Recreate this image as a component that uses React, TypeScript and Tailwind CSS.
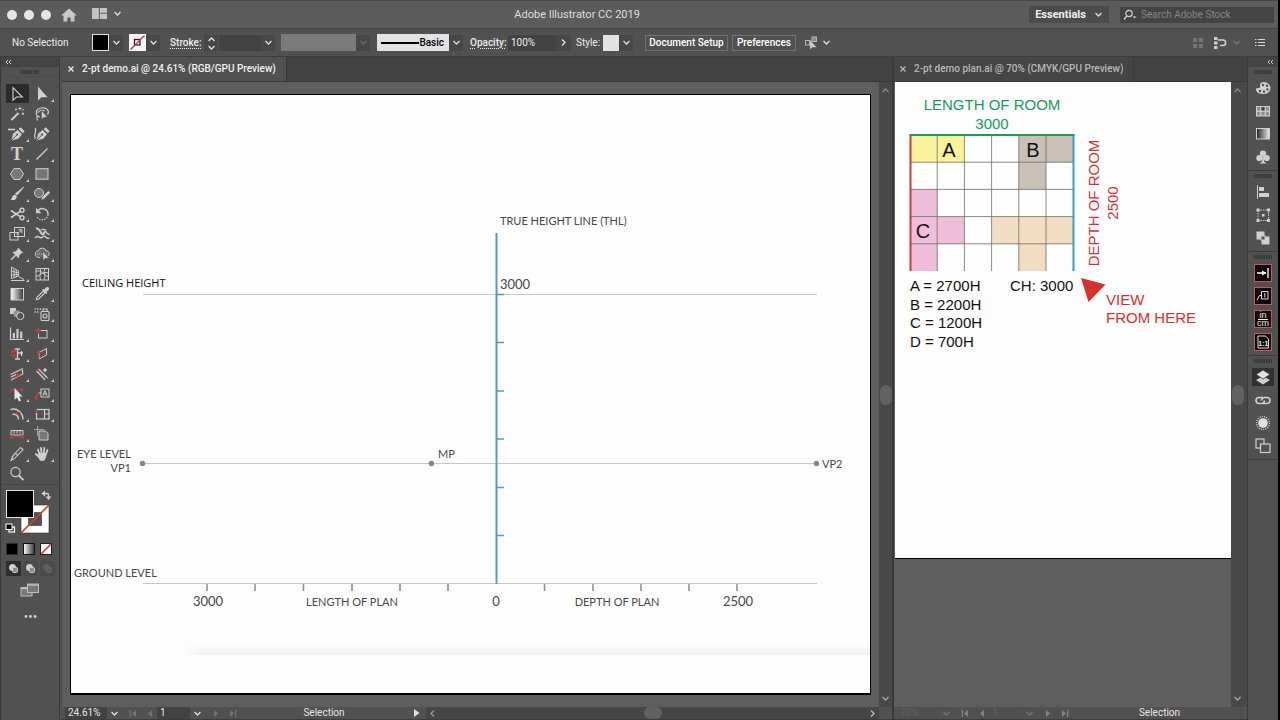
import type { ReactNode } from "react";

const INK = "#cfcfcf";
const RED = "#c2403c";

/* ---------- small shared pieces ---------- */

function Chevron({ dir = "down", color = "#e0e0e0" }: { dir?: "down" | "up" | "left" | "right"; color?: string }) {
  const d = {
    down: "M1.5 3L4.5 6L7.5 3",
    up: "M1.5 6L4.5 3L7.5 6",
    left: "M6 1.5L3 4.5L6 7.5",
    right: "M3 1.5L6 4.5L3 7.5",
  }[dir];
  return (
    <svg viewBox="0 0 9 9" className="size-[9px] shrink-0" fill="none" stroke={color} strokeWidth="1.3">
      <path d={d} />
    </svg>
  );
}

function DropButton({ label, dim }: { label: string; dim?: boolean }) {
  return (
    <button aria-label={label} className="flex h-4 w-[14px] items-center justify-center bg-[#474747]">
      <Chevron color={dim ? "#6c6c6c" : "#e0e0e0"} />
    </button>
  );
}

function Grip() {
  return (
    <div className="flex h-[9px] items-center justify-center">
      <svg viewBox="0 0 18 4" className="h-1 w-[18px]" stroke="#343434">
        <path d="M0 2H18" strokeWidth="4" strokeDasharray="1.4 1" />
      </svg>
    </div>
  );
}

/* ---------- tool icons, drawn on an 18 x 18 grid ---------- */

const arrow = (x: number, y: number) => (
  <path d={`M${x} ${y}v9l2.3-2.2H${x + 6}z`} fill={INK} stroke="#505050" strokeWidth=".5" />
);
const nib = (
  <>
    <path d="M3.5 15.5L5 8.8L9.5 5L14 9.3L10.3 13.7Z" fill={INK} />
    <path d="M10.6 4L12.6 2.2L16.6 6.2L14.9 8.2Z" fill={INK} />
    <path d="M3.8 15.2L8.8 10" stroke="#505050" strokeWidth=".9" />
    <circle cx="9.2" cy="9.6" r="1" fill="#505050" />
  </>
);

const tools: { name: string; flag?: boolean; icon: ReactNode }[] = [
  { name: "Selection", icon: <path d="M5 2.5V15.3L8.4 12H14.3Z" fill="none" stroke={INK} strokeWidth="1.1" /> },
  { name: "Direct Selection", flag: true, icon: <path d="M5 1.5V15.5L8.5 12.2H14.5Z" fill={INK} /> },
  {
    name: "Magic Wand",
    icon: (
      <g stroke={INK} fill="none">
        <path d="M3.5 15L10.5 8" strokeWidth="1.9" />
        <path d="M12 2V5M10.5 3.5H13.5M15 7.5V10M13.8 8.7H16.2M8 3.5V5.5M7 4.5H9M14 5.8L15.8 4" strokeWidth="1" />
      </g>
    ),
  },
  {
    name: "Lasso",
    icon: (
      <>
        <path d="M7 12C2 12 1.5 4 8 3C14 2 17 6 14.5 9.5M4.5 10.5C3 12 5 13.5 4 15.5M5 8C5 5.5 9 4.5 12 6" fill="none" stroke={INK} strokeWidth="1.2" />
        {arrow(8.5, 5.5)}
      </>
    ),
  },
  { name: "Pen", flag: true, icon: <>{nib}<path d="M0 4.5H7" stroke={INK} strokeWidth="1.6" /></> },
  { name: "Curvature", icon: <>{nib}<path d="M2 3C4.5 6 0 9 2.2 14" stroke={INK} strokeWidth="1.2" fill="none" /></> },
  {
    name: "Type",
    flag: true,
    icon: (
      <text x="9" y="14.5" textAnchor="middle" fontFamily="Liberation Serif, serif" fontWeight="700" fontSize="18" fill={INK}>
        T
      </text>
    ),
  },
  { name: "Line Segment", flag: true, icon: <path d="M3.5 14.5L14.5 3.5" stroke={INK} strokeWidth="1.3" /> },
  { name: "Polygon", flag: true, icon: <path d="M6 3.5H12L15.5 9L12 14.5H6L2.5 9Z" fill="#777" stroke={INK} /> },
  { name: "Rectangle", icon: <rect x="3" y="3.7" width="12" height="10.5" fill="#777" stroke={INK} /> },
  {
    name: "Paintbrush",
    flag: true,
    icon: (
      <>
        <path d="M15.8 2L9 10.2L7.4 8.8Z" fill={INK} stroke={INK} strokeWidth=".9" />
        <path d="M6.8 9.5L8.8 11.4C8.8 14.5 6 15.6 2.5 14.8C4.4 14 3.8 10.2 6.8 9.5Z" fill={INK} />
      </>
    ),
  },
  {
    name: "Shaper",
    flag: true,
    icon: (
      <>
        <circle cx="6" cy="8" r="4.5" fill="#777" stroke={INK} />
        <path d="M8 15L9 12L15.3 5.8L17.2 7.7L11 14Z" fill={INK} stroke="#505050" strokeWidth=".5" />
      </>
    ),
  },
  {
    name: "Scissors",
    flag: true,
    icon: (
      <g fill="none" stroke={INK} strokeWidth="1.4">
        <circle cx="14" cy="5.3" r="2" />
        <circle cx="14" cy="12.7" r="2" />
        <path d="M12.2 6.4L3 12.5M12.2 11.6L3 5.5" strokeWidth="1.7" />
      </g>
    ),
  },
  {
    name: "Rotate",
    flag: true,
    icon: (
      <>
        <path d="M5 5.5C9 1.5 15.3 4.5 15 9.5" fill="none" stroke={INK} strokeWidth="1.5" />
        <path d="M15 9.5C14.5 15.5 7 16.5 4 12" fill="none" stroke={INK} strokeWidth="1.4" strokeDasharray="1.3 1.3" />
        <path d="M3 2.8V8.2H8.4Z" fill={INK} />
      </>
    ),
  },
  {
    name: "Scale",
    flag: true,
    icon: (
      <g fill="none" stroke={INK}>
        <rect x="6.5" y="2.5" width="10" height="9" />
        <rect x="2" y="7.5" width="8" height="7.5" />
        <path d="M8.5 9.5L13.5 5M10.5 4.7H13.8V8" />
      </g>
    ),
  },
  {
    name: "Warp",
    flag: true,
    icon: (
      <g fill="none" stroke={INK} strokeWidth="1.4">
        <path d="M3 3.5C6.5 2.500 6.500 6.500 8.500 8.500C10.500 10.500 12 8 11 6.500" strokeWidth="2" />
        <path d="M8 5C10.500 3 11.500 6 13 4.500M12 6.500C14 6 13 9.500 16.500 9.500" />
        <path d="M2 13C5 8.500 7 15 9.500 12C12 9 13 15 16.500 13" />
      </g>
    ),
  },
  {
    name: "Puppet Warp",
    flag: true,
    icon: (
      <>
        <path d="M10 2.5L15.2 7.7L13.4 8.2L11.2 10.4L10.7 13.4L4.3 7L7.4 6.6L9.5 4.4Z" fill={INK} />
        <path d="M7.5 10.2L3 14.7" stroke={INK} strokeWidth="1.5" />
      </>
    ),
  },
  {
    name: "Shape Builder",
    flag: true,
    icon: (
      <>
        <path d="M7 12.5C1 13 1 6.5 5 6C6.5 2 13 2.5 13 6C17 6 17 10 15 11" fill="#6a6a6a" stroke={INK} />
        <path d="M4 9H11" stroke={INK} strokeDasharray="1 1" />
        {arrow(10, 6.5)}
      </>
    ),
  },
  {
    name: "Perspective Grid",
    flag: true,
    icon: (
      <g fill="none" stroke={INK}>
        <path d="M3.5 2V13.5L10.5 11V6ZM6 3.5V12.5M8.3 5V11.8M3.5 6L10.5 8M3.5 10L10.5 9.5" />
        <path d="M3 15.5H16.5M10.5 11.5L16 14.5" />
      </g>
    ),
  },
  {
    name: "Mesh",
    icon: (
      <g fill="none" stroke={INK}>
        <rect x="3" y="3.5" width="12.5" height="11.5" />
        <path d="M3 11C7 12 8 6 15.5 8M7 3.5C9 8 5 10 8 15M12 3.5C9.5 8 13.5 11 11 15M3 6.5C8 4 11 10 15.5 12" />
      </g>
    ),
  },
  { name: "Gradient", icon: <rect x="3" y="3.5" width="12.5" height="11.5" fill="url(#fade)" stroke={INK} /> },
  {
    name: "Eyedropper",
    flag: true,
    icon: (
      <>
        <path d="M3.3 14.7L4 12.3L10.3 6L12 7.7L5.7 14Z" fill="none" stroke={INK} strokeWidth="1.1" />
        <path d="M9 4.8L10.3 3.8L11.4 4.8C12.5 2.2 14.2 1.2 15.6 2.4C16.9 3.7 15.8 5.5 13.3 6.6L14.3 7.8L13.2 9Z" fill={INK} />
      </>
    ),
  },
  {
    name: "Blend",
    icon: (
      <>
        <rect x="2" y="3" width="6" height="6" fill={INK} />
        <rect x="5.5" y="5.5" width="6.5" height="6.5" rx="2" fill="#999" />
        <circle cx="12.3" cy="11" r="3.6" fill="#515151" stroke={INK} />
      </>
    ),
  },
  {
    name: "Symbol Sprayer",
    flag: true,
    icon: (
      <g fill="none" stroke={INK} strokeWidth="1.1">
        <rect x="8" y="6.5" width="8" height="9" rx="1" />
        <path d="M10 6V4H14V6" />
        <circle cx="12" cy="11" r="2" />
        <path d="M1.5 4H8M1.5 7H6" strokeDasharray="1.3 1.3" strokeWidth="1.4" />
      </g>
    ),
  },
  { name: "Column Graph", flag: true, icon: <><path d="M2.500 2.500V14.500H16" fill="none" stroke={INK} strokeWidth="1.200" /><path d="M5.800 13.500V8M9.500 13.500V4M13.200 13.500V6.500" stroke={INK} strokeWidth="2.200" /></> },
  {
    name: "Dynamic Rectangle",
    flag: true,
    icon: (
      <g fill="none">
        <rect x="5.5" y="5.5" width="8.5" height="7.5" stroke={INK} />
        <path d="M2.5 5.5H8M5.5 3V9" stroke={RED} strokeWidth="1.3" />
      </g>
    ),
  },
  {
    name: "Trim",
    flag: true,
    icon: (
      <g fill="none" strokeWidth="1.3">
        <path d="M9.500 3.500V14.500M7 4H12M7 14H12M9.500 8H15M13.500 6V11" stroke={INK} />
        <path d="M3 6H8M3 10.500H8M6 4V13M3 8.200H5" stroke={RED} />
      </g>
    ),
  },
  {
    name: "Shear Box",
    flag: true,
    icon: (
      <g fill="none">
        <path d="M6 7.5L13.5 3.5V10L6 14Z" stroke={INK} />
        <path d="M3.500 7.500H8.500M5.500 5V14" stroke={RED} strokeWidth="1.3" />
      </g>
    ),
  },
  {
    name: "Hatch",
    flag: true,
    icon: (
      <g fill="none" strokeWidth="1.2">
        <path d="M2.5 9.500L15 3.5M3 15L15.5 8.5M3 12L8 9.500M14.500 5V8" stroke={INK} />
        <path d="M5.500 13L13 9M9.500 12V7.500M7.500 8.500L12 11" stroke={RED} />
      </g>
    ),
  },
  {
    name: "Add Edge",
    flag: true,
    icon: (
      <g fill="none" strokeWidth="1.3">
        <path d="M5.5 4L14.5 13M3.5 6L12 14.8M12 3V7M10 5H14" stroke={INK} />
        <path d="M4 4L9 9.5" stroke={RED} strokeWidth="1.5" />
      </g>
    ),
  },
  {
    name: "Live Snap",
    flag: true,
    icon: (
      <>
        <path d="M2.5 5H15M3.5 3V7M14 3V7" stroke={RED} strokeWidth="1.2" />
        <path d="M6.5 3V14.8L9 12.5L11 16.5L13 15.5L11.2 11.5H14.5Z" fill="#e8e8e8" />
      </>
    ),
  },
  {
    name: "Label",
    flag: true,
    icon: (
      <>
        <rect x="8" y="4" width="8" height="8" fill="none" stroke={INK} />
        <path d="M10 10.5L12 5.5L14 10.5M10.8 9H13.2M8 8H5.5" fill="none" stroke={INK} />
        <path d="M2.5 13.5L6 8.5M2.5 10.5V13.8H5.5" fill="none" stroke={RED} strokeWidth="1.3" />
      </>
    ),
  },
  {
    name: "Offset",
    flag: true,
    icon: (
      <g fill="none" strokeWidth="1.4">
        <path d="M2.5 4.5C9 2.5 15 8 15 14.5M4.5 9.5C8 8.5 10.5 11 10.5 14.5" stroke={INK} />
        <path d="M8 5.500L12 12M7.500 9L12.500 7.500" stroke={RED} strokeWidth="1.100" />
      </g>
    ),
  },
  {
    name: "Panel Scale",
    flag: true,
    icon: (
      <g fill="none" strokeWidth="1.2">
        <rect x="3.5" y="4.5" width="12.5" height="9.5" stroke={INK} />
        <path d="M11.5 4.5V14M11.5 9H16" stroke={INK} />
        <path d="M2 5.5H6.5M3.5 3V8" stroke={RED} />
      </g>
    ),
  },
  {
    name: "Measure",
    flag: true,
    icon: (
      <g fill="none" strokeWidth="1.2">
        <path d="M3 10V5.5H15V10M6 5.5V8.5M9 5.5V8.5M12 5.5V8.5M3 10H15" stroke={INK} strokeWidth="1" />
        <path d="M2.5 12H15.5M4.5 10L2.5 12L4.5 14M13.5 10L15.5 12L13.5 14" stroke={RED} />
      </g>
    ),
  },
  {
    name: "Artboard",
    icon: (
      <>
        <path d="M6 6H12.5L15 8.5V15H6Z" fill="#777" stroke={INK} />
        <path d="M1 4.5H11M4.5 1V11" stroke="#aaa" strokeWidth=".9" />
      </>
    ),
  },
  { name: "Slice", flag: true, icon: <path d="M3 15.5C4 12 5 10 7.5 8L9.5 10.5C7.5 13 6 14.5 3 15.5ZM7.5 8L12.5 2.5L15 4.5L9.5 10.5" fill="none" stroke={INK} strokeWidth="1.1" /> },
  {
    name: "Hand",
    flag: true,
    icon: (
      <g stroke={INK} strokeLinecap="round" fill={INK}>
        <path d="M6.5 9L5 4.5M8.5 8.5L8 2.8M10.8 8.5L11.3 3M12.8 9.5L14.5 5M6.2 12L2.8 9" strokeWidth="1.8" />
        <path d="M6 8.5H13L12.5 12.5L11 15.3H7.3L5.2 11.5Z" strokeWidth="1" />
      </g>
    ),
  },
  {
    name: "Zoom",
    icon: (
      <g fill="none" stroke={INK}>
        <circle cx="7.5" cy="7" r="4.6" strokeWidth="1.2" />
        <path d="M10.8 10.5L15.5 15.2" strokeWidth="1.8" />
      </g>
    ),
  },
];

function Toolbar() {
  return (
    <aside aria-label="Tools" className="flex w-[60px] shrink-0 flex-col border-x border-[#3b3b3b] bg-[#515151]">
      <button aria-label="Collapse tools" className="flex h-[10px] items-center bg-[#444444] pl-1">
        <svg viewBox="0 0 7 6" className="h-[6px] w-[7px]" fill="none" stroke="#c8c8c8">
          <path d="M3 1L1 3L3 5M6 1L4 3L6 5" />
        </svg>
      </button>
      <div className="border-b border-[#4c4c4c]">
        <Grip />
      </div>
      <div className="mt-[7px] grid grid-cols-[25px_25px] pl-[5px]">
        {tools.map((t, i) => (
          <button key={t.name} aria-label={t.name} title={t.name} className="h-5 w-[25px]">
            <svg viewBox="0 0 25 20" className="h-5 w-[25px]">
              {i === 0 && <rect x="0" y="0" width="23" height="19" rx="1" fill="#2b2b2b" />}
              <g transform="translate(2 1)">{t.icon}</g>
              {t.flag && <path d="M20 18H23V15Z" fill={INK} />}
            </svg>
          </button>
        ))}
      </div>
      <div className="flex justify-center border-t border-[#484848] pt-[2px]">
        <svg viewBox="5 488 50 48" className="h-12 w-[50px]">
          <path d="M21 506H49V534H21ZM28.500 513.500V526.500H41.500V513.500Z" fill="#fdfdfd" fillRule="evenodd" stroke="#333" strokeWidth=".6" />
          <path d="M21 534L49 506" stroke="#d43b37" strokeWidth="1.7" />
          <rect x="6.500" y="491.500" width="27" height="27" fill="#000" stroke="#e9e9e9" />
          <path d="M43.500 494.500H47.500C48.500 494.500 48.500 495 48.500 499" fill="none" stroke={INK} strokeWidth="1.3" />
          <path d="M45 491.500V497.500L41.500 494.500ZM45.500 497.500H51.500L48.500 501Z" fill={INK} />
          <rect x="9" y="528" width="5.500" height="5" fill="#505050" stroke="#fff" strokeWidth="1.2" />
          <rect x="6" y="525" width="6" height="5.500" fill="#000" stroke="#fff" />
        </svg>
      </div>
      <div className="mt-[6px] flex gap-[5px] pl-[5px]">
        <button aria-label="Color" className="flex h-4 w-3 items-center justify-center">
          <svg viewBox="0 0 12 12" className="size-3"><rect x=".5" y=".5" width="11" height="11" fill="#000" stroke="#2c2c2c" /></svg>
        </button>
        <button aria-label="Gradient fill" className="flex h-4 w-3 items-center justify-center">
          <svg viewBox="0 0 12 12" className="size-3"><rect x=".5" y=".5" width="11" height="11" fill="url(#fade)" stroke="#111" /></svg>
        </button>
        <button aria-label="None" className="flex h-4 w-3 items-center justify-center">
          <svg viewBox="0 0 12 12" className="size-3">
            <rect x=".5" y=".5" width="11" height="11" fill="#fff" stroke="#222" />
            <path d="M1 11L11 1" stroke="#d43b37" strokeWidth="1.7" />
          </svg>
        </button>
      </div>
      <div className="mt-1 flex gap-[2px] pl-[5px]">
        {["Draw Normal", "Draw Behind", "Draw Inside"].map((name, i) => (
          <button key={name} aria-label={name} className={i === 0 ? "size-[15px] bg-[#2e2e2e]" : "size-[15px] bg-[#4b4b4b]"}>
            <svg viewBox="0 0 15 15" className="size-[15px]">
              <circle cx="6.500" cy="6.500" r="3.500" fill={i === 2 ? "#5e5e5e" : INK} />
              <rect x="6.500" y="6.500" width="5" height="5" rx="1" fill={i === 2 ? "#5a5a5a" : "#8d8d8d"} stroke={i === 2 ? "#666" : INK} />
            </svg>
          </button>
        ))}
      </div>
      <button aria-label="Change Screen Mode" className="mt-[7px] flex justify-center">
        <svg viewBox="0 0 20 15" className="h-[15px] w-5" fill="#777" stroke="#bdbdbd">
          <rect x="1" y="4.500" width="11" height="8.500" />
          <rect x="7.500" y="1" width="11" height="8.500" />
          <path d="M1 5.500H7M7.500 2H18.500" strokeWidth="1.5" />
        </svg>
      </button>
      <button aria-label="Edit Toolbar" className="mt-[14px] flex justify-center">
        <svg viewBox="0 0 13 9" className="h-[9px] w-[13px]" fill={INK}>
          <circle cx="2" cy="4.500" r="1.400" />
          <circle cx="6.500" cy="4.500" r="1.400" />
          <circle cx="11" cy="4.500" r="1.400" />
        </svg>
      </button>
    </aside>
  );
}

/* ---------- title bar and control bar ---------- */

function TitleBar() {
  return (
    <header className="flex h-[29px] shrink-0 items-center border-y border-t-[#474747] border-b-[#464646] bg-[#5c5c5c] pl-[7px] pr-1">
      <div className="flex flex-[4] items-center">
        <div className="flex gap-[7px]">
          {["Close", "Minimize", "Full screen"].map((n) => (
            <button key={n} aria-label={n} className="size-[10px] rounded-full bg-[#e4e4e4]" />
          ))}
        </div>
        <button aria-label="Home" className="ml-[10px]">
          <svg viewBox="0 0 16 14" className="h-[14px] w-4" fill="#c9c9c9">
            <path d="M8 .5L15.800 7.500H13.500V13.500H9.600V9.500H6.400V13.500H2.500V7.500H.2Z" />
          </svg>
        </button>
        <button aria-label="Arrange Documents" className="ml-[15px] flex items-center gap-[6px] pb-[2px]">
          <svg viewBox="0 0 15 11" className="h-[11px] w-[15px]" fill="#c4c4c4">
            <path d="M0 0H6.800V11H0ZM7.800 0H15V4.800H7.800ZM7.800 5.800H15V11H7.800Z" />
          </svg>
          <Chevron />
        </button>
      </div>
      <h1 className="text-[11px] leading-4 text-[#dedede]">Adobe Illustrator CC 2019</h1>
      <div className="flex flex-[5] items-center justify-end gap-[11px]">
        <button className="flex h-[17px] w-20 items-center justify-center gap-2 bg-[#4c4c4c] text-[11px] font-bold leading-4 text-[#f2f2f2]">
          Essentials
          <Chevron />
        </button>
        <label className="flex h-4 w-[154px] items-center gap-1 bg-[#444444] pl-[3px]">
          <svg viewBox="0 0 14 12" className="h-3 w-[14px] shrink-0" fill="none" stroke="#d0d0d0">
            <circle cx="6" cy="4.500" r="3.200" strokeWidth="1.200" />
            <path d="M3.800 7L1 10.500" strokeWidth="1.400" />
            <path d="M9.500 7.500H13.500L11.500 9.500Z" fill="#d0d0d0" stroke="none" />
          </svg>
          <input
            type="search"
            aria-label="Search Adobe Stock"
            placeholder="Search Adobe Stock"
            className="w-full min-w-0 bg-transparent text-[10px] leading-4 outline-none placeholder:text-[#858585]"
          />
        </label>
      </div>
    </header>
  );
}

function ControlBar() {
  return (
    <div className="flex h-7 shrink-0 items-center border-b border-[#3d3d3d] bg-[#515151] pl-3 pr-[13px] text-[10px] leading-4 text-[#ececec]">
      <span className="w-20">No Selection</span>
      <button aria-label="Fill" className="size-[17px] border border-[#e0e0e0] bg-black" />
      <DropButton label="Fill options" />
      <button aria-label="Stroke color" className="ml-[6px]">
        <svg viewBox="0 0 17 17" className="size-[17px]">
          <rect width="17" height="17" fill="#f6f6f6" />
          <rect x="5.500" y="5.500" width="5.500" height="5.500" fill="none" stroke="#222" strokeWidth="1.300" />
          <path d="M1.500 15.500L15.500 1.500" stroke="#c8403c" strokeWidth="1.500" />
        </svg>
      </button>
      <DropButton label="Stroke color options" />
      <label htmlFor="weight" className="ml-[10px] w-[34px] font-medium underline decoration-dotted underline-offset-2">
        Stroke:
      </label>
      <div className="flex w-[14px] flex-col items-center bg-[#474747]">
        <button aria-label="Increase stroke" className="h-2"><Chevron dir="up" /></button>
        <button aria-label="Decrease stroke" className="h-2"><Chevron /></button>
      </div>
      <input id="weight" className="ml-px h-4 w-[42px] bg-[#424242] px-1 outline-none" />
      <DropButton label="Stroke weights" />
      <div className="ml-[6px] h-[17px] w-[75px] bg-[#7b7b7b]" />
      <DropButton label="Variable width profile" dim />
      <button className="ml-[7px] flex h-[17px] w-[72px] items-center justify-between bg-[#e2e2e2] pl-1 pr-[5px] font-medium text-black">
        <span className="h-[2px] w-[38px] bg-black" />
        Basic
      </button>
      <DropButton label="Brush definitions" />
      <label htmlFor="opacity" className="ml-[7px] w-[38px] font-medium underline decoration-dotted underline-offset-2">
        Opacity:
      </label>
      <input id="opacity" defaultValue="100%" className="h-4 w-12 bg-[#424242] px-[3px] outline-none" />
      <button aria-label="Opacity slider" className="flex h-4 w-[15px] items-center justify-center bg-[#474747]">
        <Chevron dir="right" />
      </button>
      <span className="ml-[5px] w-[27px]">Style:</span>
      <button aria-label="Graphic style" className="size-4 bg-[#e2e2e2]" />
      <DropButton label="Graphic styles" />
      <button className="ml-3 h-4 w-[83px] whitespace-nowrap border border-[#727272] font-medium leading-[14px] text-white">Document Setup</button>
      <button className="ml-1 h-4 w-16 border border-[#727272] font-medium leading-[14px] text-white">Preferences</button>
      <button aria-label="Select Similar" className="ml-2 flex items-center gap-1">
        <svg viewBox="0 0 14 14" className="size-[14px]" fill="none" stroke="#b5b5b5">
          <rect x="8" y="1" width="4.500" height="4.500" fill="#888" />
          <rect x="1.500" y="4.500" width="4" height="4.500" />
          <path d="M6 4V13.500L8.200 11.200H12.500Z" fill="#c9c9c9" stroke="none" />
        </svg>
        <Chevron />
      </button>
      <div className="ml-auto flex items-center">
        <svg viewBox="0 0 11 11" className="size-[10px]" fill="#757575">
          <path d="M0 0H4.500V4.500H0ZM6.500 0H11V4.500H6.500ZM0 6.500H4.500V11H0ZM6.500 6.500H11V11H6.500Z" />
        </svg>
        <button aria-label="Snap options" className="ml-[10px] flex items-center gap-[5px]">
          <svg viewBox="0 0 14 12" className="h-3 w-[14px]" fill="#cfcfcf">
            <path d="M1 0H4.500V3H1ZM1 4.500H4.500V7.500H1ZM1 9H4.500V12H1Z" />
            <path d="M5 3H10C13.500 3 13.500 8.500 10 8.500H7" fill="none" stroke="#cfcfcf" strokeWidth="1.600" />
          </svg>
          <Chevron color="#777" />
        </button>
        <button aria-label="Panel menu" className="ml-[14px]">
          <svg viewBox="0 0 10 9" className="h-[9px] w-[10px]" stroke="#d6d6d6" strokeWidth="1.200">
            <path d="M0 1.500H1.500M0 4.500H1.500M0 7.500H1.500M3 1.500H10M3 4.500H10M3 7.500H10" />
          </svg>
        </button>
      </div>
    </div>
  );
}

/* ---------- documents ---------- */

function DocTab({ title, active }: { title: string; active?: boolean }) {
  return (
    <div role="tablist" className="flex h-[25px] shrink-0 border-b border-[#3a3a3a] bg-[#424242]">
      <div className={active ? "flex items-center border-r border-[#383838] bg-[#515151] pl-[6px] pr-[10px] text-[#f0f0f0]" : "flex items-center border-r border-[#3b3b3b] bg-[#454545] pl-[6px] pr-[10px] text-[#b8b8b8]"}>
        <button aria-label={`Close ${title}`} className="mr-2">
          <svg viewBox="0 0 6 6" className="size-[6px]" stroke="currentColor" strokeWidth="1.200">
            <path d="M.5 .5L5.500 5.500M5.500 .5L.5 5.500" />
          </svg>
        </button>
        <button role="tab" aria-selected={!!active} className="whitespace-nowrap text-[10px] font-medium leading-4">
          {title}
        </button>
      </div>
    </div>
  );
}

function VScroll() {
  return (
    <div className="flex w-[13px] shrink-0 flex-col items-center justify-between bg-[#484848] py-1">
      <button aria-label="Scroll up"><Chevron dir="up" color="#8c8c8c" /></button>
      <span className="h-5 w-3 rounded-full bg-[#626262]" />
      <button aria-label="Scroll down"><Chevron color="#a8a8a8" /></button>
    </div>
  );
}

function NavArrow({ label, end, flip, dim }: { label: string; end?: boolean; flip?: boolean; dim?: boolean }) {
  return (
    <button aria-label={label} className="flex w-4 justify-center">
      <svg viewBox="0 0 9 7" className={flip ? "h-[7px] w-[9px] rotate-180" : "h-[7px] w-[9px]"} fill={dim ? "#838383" : "#737373"}>
        <path d="M2 0L6 3.500L2 7Z" />
        {end && <path d="M7 0H8.300V7H7Z" />}
      </svg>
    </button>
  );
}

function StatusBar({ id, zoom, page, active }: { id: string; zoom: string; page: string; active?: boolean }) {
  const field = active ? "bg-[#424242] text-[#e6e6e6]" : "bg-[#505050] text-[#606060]";
  return (
    <div className="flex h-[13px] shrink-0 items-center border-b border-[#3c3c3c] bg-[#515151] pl-[3px] text-[10px] leading-3 text-[#e6e6e6]">
      <input aria-label={`${id} zoom level`} defaultValue={zoom} className={`h-3 w-[42px] px-[3px] outline-none ${field}`} />
      <button aria-label={`${id} zoom presets`} className="flex w-[14px] justify-center"><Chevron color={active ? "#e0e0e0" : "#757575"} /></button>
      <div className="ml-1 flex">
        <NavArrow label="First artboard" end flip dim={!active} />
        <NavArrow label="Previous artboard" flip dim={!active} />
      </div>
      <input aria-label={`${id} artboard number`} defaultValue={page} className={`h-3 w-[33px] px-[3px] outline-none ${field}`} />
      <button aria-label={`${id} artboard list`} className="flex w-[14px] justify-center"><Chevron color={active ? "#e0e0e0" : "#757575"} /></button>
      <div className="ml-1 flex">
        <NavArrow label="Next artboard" dim={!active} />
        <NavArrow label="Last artboard" end dim={!active} />
      </div>
      {active ? (
        <>
          <span className="w-[168px] text-center">Selection</span>
          <button aria-label="Status options" className="flex w-[18px] justify-center">
            <svg viewBox="0 0 6 8" className="h-2 w-[6px]" fill="#e0e0e0"><path d="M0 0L5.500 4L0 8Z" /></svg>
          </button>
          <div className="flex h-3 flex-1 items-center justify-between bg-[#464646] px-[2px]">
            <button aria-label="Scroll left"><Chevron dir="left" color="#999" /></button>
            <span className="h-3 w-[18px] rounded-full bg-[#626262]" />
            <button aria-label="Scroll right"><Chevron dir="right" color="#bbb" /></button>
          </div>
          <span className="w-[13px]" />
        </>
      ) : (
        <span className="flex-1 text-center">Selection</span>
      )}
    </div>
  );
}

const leftTicks = [207, 255, 303.5, 352, 400, 448];
const rightTicks = [544.5, 593, 641, 689, 737];
const heightTicks = [294.5, 342.5, 391, 439, 487.5, 535.5];

type Label = [number, number, string, "start" | "middle" | "end"];

const wordLabels: Label[] = [
  [500, 225, "TRUE HEIGHT LINE (THL)", "start"],
  [77, 458, "EYE LEVEL", "start"],
  [131, 472, "VP1", "end"],
  [438, 458, "MP", "start"],
  [822, 468, "VP2", "start"],
  [74, 577, "GROUND LEVEL", "start"],
  [352, 606, "LENGTH OF PLAN", "middle"],
  [617, 606, "DEPTH OF PLAN", "middle"],
];

const numberLabels: Label[] = [
  [500, 289, "3000", "start"],
  [208, 606, "3000", "middle"],
  [496, 606, "0", "middle"],
  [738, 606, "2500", "middle"],
];

function Labels({ items }: { items: Label[] }) {
  return (
    <>
      {items.map(([x, y, t, a]) => (
        <text key={`${t}-${x}`} x={x} y={y} textAnchor={a}>{t}</text>
      ))}
    </>
  );
}

function PerspectiveDrawing() {
  return (
    <svg viewBox="71 95 799 598" className="h-full w-full bg-[#fdfdfd]" fontFamily="Lato, sans-serif">
      <defs>
        <linearGradient id="haze" x1="0" y1="0" x2="0" y2="1">
          <stop offset="0" stopColor="#fdfdfd" />
          <stop offset="1" stopColor="#f1f1f1" />
        </linearGradient>
        <linearGradient id="hazeEdge" x1="0" y1="0" x2="1" y2="0">
          <stop offset="0" stopColor="#fdfdfd" />
          <stop offset="1" stopColor="#fdfdfd" stopOpacity="0" />
        </linearGradient>
      </defs>
      <rect x="181" y="643" width="690" height="12" fill="url(#haze)" />
      <rect x="180" y="642" width="24" height="14" fill="url(#hazeEdge)" />
      <g stroke="#c6c6c6">
        <path d="M143 294.500H817M143 463.500H817M143 583.500H817" />
      </g>
      <g stroke="#8a8a8a" strokeWidth="1.500">
        {[...leftTicks, ...rightTicks].map((x) => (
          <path key={x} d={`M${x} 584V591`} />
        ))}
      </g>
      <g stroke="#5e97bd" strokeWidth="2">
        <path d="M496.500 233V584" />
        {heightTicks.map((y) => (
          <path key={y} d={`M497 ${y}H504`} strokeWidth="1.500" />
        ))}
      </g>
      <g fill="#858585">
        <circle cx="142.500" cy="463.500" r="2.700" />
        <circle cx="431.500" cy="463.500" r="2.700" />
        <circle cx="816.500" cy="463.500" r="2.700" />
      </g>
      <g fill="#484848" fontSize="11"><Labels items={wordLabels} /></g>
      <g fill="#484848" fontSize="13"><Labels items={numberLabels} /></g>
      <text x="82" y="287" fill="#111111" fontFamily="Open Sans, sans-serif" fontSize="11">CEILING HEIGHT</text>
    </svg>
  );
}

const cell = 27.2;
const shaded: [number, number, string][] = [
  [0, 0, "#faf39c"], [1, 0, "#faf39c"],
  [4, 0, "#cbc0b6"], [5, 0, "#cbc0b6"], [4, 1, "#cbc0b6"],
  [0, 2, "#eebdda"], [0, 3, "#eebdda"], [1, 3, "#eebdda"], [0, 4, "#eebdda"],
  [3, 3, "#f2dcc2"], [4, 3, "#f2dcc2"], [5, 3, "#f2dcc2"], [4, 4, "#f2dcc2"],
];

function PlanDrawing() {
  return (
    <svg viewBox="895 82 336 476" className="h-[476px] w-full bg-[#fdfdfd]" fontFamily="Liberation Sans, Arial, sans-serif" fontSize="15">
      {shaded.map(([c, r, f]) => (
        <rect key={`${c}-${r}`} x={910 + c * cell} y={135 + r * cell} width={cell} height={cell} fill={f} />
      ))}
      <g stroke="#6b6b6b" strokeWidth=".8">
        {[1, 2, 3, 4, 5].map((n) => (
          <path key={n} d={`M${910 + n * cell} 135V271`} />
        ))}
        {[1, 2, 3, 4].map((n) => (
          <path key={n} d={`M910 ${135 + n * cell}H1074`} />
        ))}
      </g>
      <path d="M910.500 135V271" stroke="#c93a38" strokeWidth="2" />
      <path d="M1073.500 135V271" stroke="#2aa3cc" strokeWidth="2" />
      <path d="M909.500 135H1074.500" stroke="#1f9a57" strokeWidth="2" />
      <g fill="#159a5b" textAnchor="middle">
        <text x="992" y="110">LENGTH OF ROOM</text>
        <text x="992" y="129">3000</text>
      </g>
      <g fill="#cf3331">
        <text transform="translate(1099 203) rotate(-90)" textAnchor="middle">DEPTH OF ROOM</text>
        <text transform="translate(1118 203) rotate(-90)" textAnchor="middle">2500</text>
        <text x="1106" y="305">VIEW</text>
        <text x="1106" y="323">FROM HERE</text>
        <path d="M1081 278L1105.500 284.500L1088.500 302Z" fill="#d8312d" />
      </g>
      <g fill="#111111">
        <g fontSize="20" textAnchor="middle">
          <text x="949" y="157">A</text>
          <text x="1033" y="157">B</text>
          <text x="923" y="238">C</text>
        </g>
        <text x="910" y="291">A = 2700H</text>
        <text x="910" y="310">B = 2200H</text>
        <text x="910" y="328">C = 1200H</text>
        <text x="910" y="347">D = 700H</text>
        <text x="1010" y="291">CH: 3000</text>
      </g>
    </svg>
  );
}

/* ---------- panel dock ---------- */

const redFrame = <rect x=".500" y=".500" width="17" height="17" fill="#0e0808" stroke="#c4565c" />;

const dock: { name: string; icon: ReactNode }[][] = [
  [
    {
      name: "Color",
      icon: (
        <>
          <path d="M9.500 3C14 3 16.500 6.500 16.500 9C16.500 13 13 15 9 15C4 15 1.500 12 2 10C2.500 8.500 5 9.500 6 8.500C6.800 7.500 4 4 9.500 3Z" fill={INK} />
          <g fill="#515151">
            <circle cx="9" cy="6" r="1.200" /><circle cx="13" cy="6.800" r="1.200" /><circle cx="13.500" cy="10.500" r="1.200" /><circle cx="10" cy="12.500" r="1.200" /><circle cx="6" cy="12" r="1.200" />
          </g>
        </>
      ),
    },
    {
      name: "Swatches",
      icon: (
        <>
          <rect x="2.500" y="4.500" width="13" height="9.500" fill="#8f8f8f" stroke={INK} />
          <path d="M2.500 9.200H15.500M6.800 4.500V14M11.200 4.500V14" stroke={INK} strokeWidth="1.200" />
          <path d="M7.500 5.200H10.500V8.500H7.500Z" fill="#3d3d3d" />
        </>
      ),
    },
    { name: "Gradient panel", icon: <rect x="2.500" y="3.500" width="13" height="10.500" fill="url(#fadeDark)" stroke={INK} /> },
    {
      name: "Symbols",
      icon: (
        <g fill={INK}>
          <circle cx="9" cy="5.500" r="3.100" /><circle cx="5.300" cy="10" r="3.100" /><circle cx="12.700" cy="10" r="3.100" />
          <path d="M8.300 8H9.700L10 13.500L12.500 15.500H5.500L8 13.500Z" />
        </g>
      ),
    },
  ],
  [
    { name: "Align", icon: <><path d="M3.500 2V16" stroke={INK} /><path d="M5 4H10V8H5ZM5 10H15V14H5Z" fill={INK} /></> },
    {
      name: "Transform",
      icon: (
        <>
          <rect x="4" y="4" width="10.500" height="10.500" fill="none" stroke={INK} strokeDasharray="1.500 1" />
          <path d="M2.500 2.500H5.500V5.500H2.500ZM13 2.500H16V5.500H13ZM2.500 13H5.500V16H2.500ZM13 13H16V16H13ZM8 8H10.500V10.500H8Z" fill={INK} />
        </>
      ),
    },
    {
      name: "Pathfinder",
      icon: (
        <>
          <rect x="2.500" y="2.500" width="8" height="8" fill={INK} />
          <rect x="7.500" y="7.500" width="8" height="8" fill={INK} />
          <rect x="7" y="7" width="4" height="4" fill="#515151" stroke={INK} />
        </>
      ),
    },
  ],
  [
    { name: "Dynamic Measure", icon: <>{redFrame}<path d="M3 9H12M14 4V14" stroke="#fff" strokeWidth="1.300" /><path d="M8 6.500L12.500 9L8 11.500Z" fill="#fff" /></> },
    {
      name: "Labels",
      icon: (
        <>
          {redFrame}
          <path d="M7.500 4.500H14V12H7.500ZM7.500 8.500H5.500L3 13M10.800 6V10.500" fill="none" stroke="#ddd" />
        </>
      ),
    },
    {
      name: "Units",
      icon: (
        <>
          {redFrame}
          <g fill="#eee" fontSize="9" fontFamily="Liberation Sans, sans-serif" textAnchor="middle">
            <text x="9" y="8">in</text>
            <text x="9" y="16">cm</text>
          </g>
          <path d="M4 9.500H14" stroke="#eee" />
        </>
      ),
    },
    {
      name: "Scale panel",
      icon: (
        <>
          {redFrame}
          <path d="M4 3H11.500L14.500 6V15H4Z" fill="none" stroke="#ddd" />
          <text x="9.300" y="12.500" fill="#eee" fontSize="7" fontWeight="700" fontFamily="Liberation Sans, sans-serif" textAnchor="middle">1:1</text>
        </>
      ),
    },
  ],
  [
    { name: "Layers", icon: <><path d="M9 8L2 12L9 16.500L16 12Z" fill={INK} /><path d="M9 2L2 6.500L9 11L16 6.500Z" fill="#e0e0e0" stroke="#333" strokeWidth=".800" /></> },
    {
      name: "Links",
      icon: (
        <g fill="none" stroke={INK} strokeWidth="1.700">
          <path d="M9 6.500H5A3 3 0 0 0 5 12.500H7.500A3 3 0 0 0 10.500 9.500" />
          <path d="M9 12.500H13A3 3 0 0 0 13 6.500H10.500A3 3 0 0 0 7.500 9.500" />
        </g>
      ),
    },
    {
      name: "Appearance",
      icon: (
        <>
          <circle cx="9" cy="9" r="6.500" fill="none" stroke={INK} strokeDasharray="1 1.200" strokeWidth="1.400" />
          <circle cx="9" cy="9" r="4.800" fill="#e0e0e0" />
        </>
      ),
    },
    {
      name: "Asset Export",
      icon: (
        <g fill="#515151" stroke={INK} strokeWidth="1.200">
          <rect x="2" y="2" width="8" height="9" />
          <rect x="6.500" y="7" width="9.500" height="8.500" />
        </g>
      ),
    },
  ],
];

function Dock() {
  return (
    <aside aria-label="Panels" className="flex w-[31px] shrink-0 flex-col border-l border-[#3a3a3a] bg-[#515151]">
      <button aria-label="Expand panels" className="flex h-[10px] items-center justify-end bg-[#444444] pr-1">
        <svg viewBox="0 0 7 6" className="h-[6px] w-[7px]" fill="none" stroke="#c8c8c8">
          <path d="M3 1L1 3L3 5M6 1L4 3L6 5" />
        </svg>
      </button>
      {dock.map((group, g) => (
        <section key={g} className="flex flex-col border-b border-[#3b3b3b] pb-[2px]">
          <Grip />
          {group.map((p) => (
            <button key={p.name} aria-label={p.name} title={p.name} className="flex h-[23px] items-center justify-center">
              <span className={p.name === "Layers" ? "flex h-[18px] w-[22px] justify-center bg-[#303030]" : "flex h-[18px] w-[22px] justify-center"}>
                <svg viewBox="0 0 18 18" className="size-[18px]">{p.icon}</svg>
              </span>
            </button>
          ))}
        </section>
      ))}
    </aside>
  );
}

export default function App() {
  return (
    <div className="flex h-screen min-h-[700px] flex-col overflow-hidden border-r-2 border-black bg-[#515151] font-['Roboto',sans-serif]">
      <svg className="absolute size-0" aria-hidden="true">
        <defs>
          <linearGradient id="fade"><stop offset="0" stopColor="#fff" /><stop offset="1" stopColor="#333" /></linearGradient>
          <linearGradient id="fadeDark"><stop offset="0" stopColor="#222" /><stop offset="1" stopColor="#eee" /></linearGradient>
        </defs>
      </svg>
      <TitleBar />
      <ControlBar />
      <main className="flex min-h-0 flex-1">
        <Toolbar />
        <section className="ml-[2px] flex min-w-0 flex-1 flex-col bg-[#5e5e5e]">
          <DocTab title="2-pt demo.ai @ 24.61% (RGB/GPU Preview)" active />
          <div className="flex min-h-0 flex-1">
            <div className="min-w-0 flex-1 pb-3 pl-2 pr-2 pt-3">
              <div className="h-full border border-b-2 border-black">
                <PerspectiveDrawing />
              </div>
            </div>
            <VScroll />
          </div>
          <StatusBar id="Perspective" zoom="24.61%" page="1" active />
        </section>
        <section className="flex w-[355px] shrink-0 flex-col border-l-2 border-[#383838] bg-[#5e5e5e]">
          <DocTab title="2-pt demo plan.ai @ 70% (CMYK/GPU Preview)" />
          <div className="flex min-h-0 flex-1">
            <div className="min-w-0 flex-1 pl-px">
              <div className="border-b border-black"><PlanDrawing /></div>
            </div>
            <VScroll />
            <span className="w-[3px] bg-[#484848]" />
          </div>
          <StatusBar id="Plan" zoom="70%" page="1" />
        </section>
        <Dock />
      </main>
    </div>
  );
}
